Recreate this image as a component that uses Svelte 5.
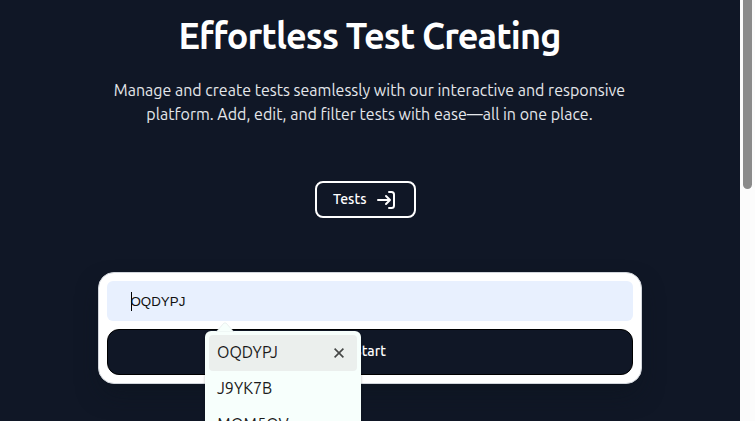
<script>
  const suggestions = ['OQDYPJ', 'J9YK7B', 'MQM5QV'];
</script>

<div class="window">
  <main>
    <h1>Effortless Test Creating</h1>
    <p class="intro">
      Manage and create tests seamlessly with our interactive and responsive<br />
      platform. Add, edit, and filter tests with ease—all in one place.
    </p>
    <button class="tests">
      <span>Tests</span>
      <svg width="20" height="20" viewBox="0 0 20 20" fill="none" stroke="currentColor" stroke-width="2" stroke-linecap="round" stroke-linejoin="round">
        <path d="M1 10H13M9 6l4 4-4 4M12 2H14.5a2.5 2.5 0 0 1 2.5 2.5V15.5a2.5 2.5 0 0 1-2.5 2.5H12" />
      </svg>
    </button>
    <form class="card">
      <div class="field"><i class="caret"></i><span>OQDYPJ</span></div>
      <button class="start" type="button">Start</button>
      <div class="popup">
        <svg class="tip" width="20" height="10" viewBox="0 0 20 10"><path d="M1 10L8.5 1.5Q10 0 11.5 1.5L19 10Z" fill="#f7fffc" stroke="#dfe5e4" stroke-width=".6" /></svg>
        {#each suggestions as code, i}
          <div class="option" class:active={i === 0}>
            <span>{code}</span>
            {#if i === 0}
              <svg width="10" height="10" viewBox="0 0 10 10" stroke="#454746" stroke-width="1.6"><path d="M.6 .6L9.4 9.4M9.4 .6L.6 9.4" /></svg>
            {/if}
          </div>
        {/each}
      </div>
    </form>
  </main>
  <aside class="scrollbar"><div class="thumb"></div></aside>
</div>

<style>
  :global(body) { margin: 0; overflow: hidden; }
  .window {
    display: flex;
    width: 755px;
    height: 421px;
    overflow: hidden;
    font-family: Ubuntu, "Noto Sans", sans-serif;
  }
  main {
    width: 740px;
    height: 421px;
    background: #101726;
    color: #fff;
    display: flex;
    flex-direction: column;
    align-items: center;
  }
  h1 {
    margin: 16px 1px 0 0;
    height: 40px;
    font-size: 36px;
    line-height: 40px;
    font-weight: 600;
    letter-spacing: -0.9px;
    white-space: nowrap;
  }
  .intro {
    margin: 22px 1px 0 0;
    height: 48px;
    font-size: 16px;
    line-height: 24px;
    color: #e5e7eb;
    text-align: center;
    white-space: nowrap;
  }
  button { font-family: inherit; color: #fff; box-sizing: border-box; }
  .tests {
    display: flex;
    align-items: center;
    justify-content: space-between;
    flex: none;
    margin: 55px 9px 0 0;
    width: 101px;
    height: 37px;
    padding: 0 17px 1px 16px;
    border: 2px solid #fff;
    border-radius: 8px;
    background: #101726;
    font-size: 14px;
    line-height: 20px;
    font-weight: 500;
  }
  .tests span { padding-bottom: 1px; }
  .tests svg { flex: none; margin-top: 2px; }
  .card {
    position: relative;
    display: flex;
    flex-direction: column;
    flex: none;
    gap: 8px;
    box-sizing: border-box;
    width: 544px;
    height: 112px;
    margin: 54px 0 0;
    padding: 8px;
    border: 1px solid #d1d5db;
    border-radius: 16px;
    background: #fff;
    box-shadow: 0 12px 24px -4px rgba(12, 19, 28, 0.5);
  }
  .field {
    display: flex;
    align-items: center;
    height: 40px;
    padding-left: 24px;
    border-radius: 6px;
    background: #e8f0fe;
    color: #111;
    font: 13.33px "Liberation Sans", Arial, sans-serif;
  }
  .caret { width: 1px; height: 19px; margin-right: -1.5px; background: #000; }
  .start {
    height: 46px;
    padding: 0 0 2px;
    border: 1px solid #000;
    border-radius: 12px;
    background: #101726;
    font-size: 14px;
    font-weight: 500;
  }
  .popup {
    position: absolute;
    left: 106px;
    top: 58px;
    box-sizing: border-box;
    width: 156px;
    height: 120px;
    padding: 4px;
    border-radius: 6px;
    background: #f7fffc;
    box-shadow: 0 1px 3px rgba(0, 0, 0, 0.25);
  }
  .tip { position: absolute; left: 10px; top: -9px; }
  .option {
    display: flex;
    align-items: center;
    justify-content: space-between;
    box-sizing: border-box;
    height: 36px;
    padding: 0 13px 0 8px;
    border-radius: 4px;
    color: #1a1a1a;
    font-size: 16px;
  }
  .option span { padding-bottom: 2px; }
  .active { background: #ebefed; }
  .scrollbar { width: 15px; height: 421px; background: #fcfcfc; }
  .thumb { width: 9px; height: 189px; margin-left: 3px; border-radius: 0 0 5px 5px; background: #8b8b8b; }
</style>
